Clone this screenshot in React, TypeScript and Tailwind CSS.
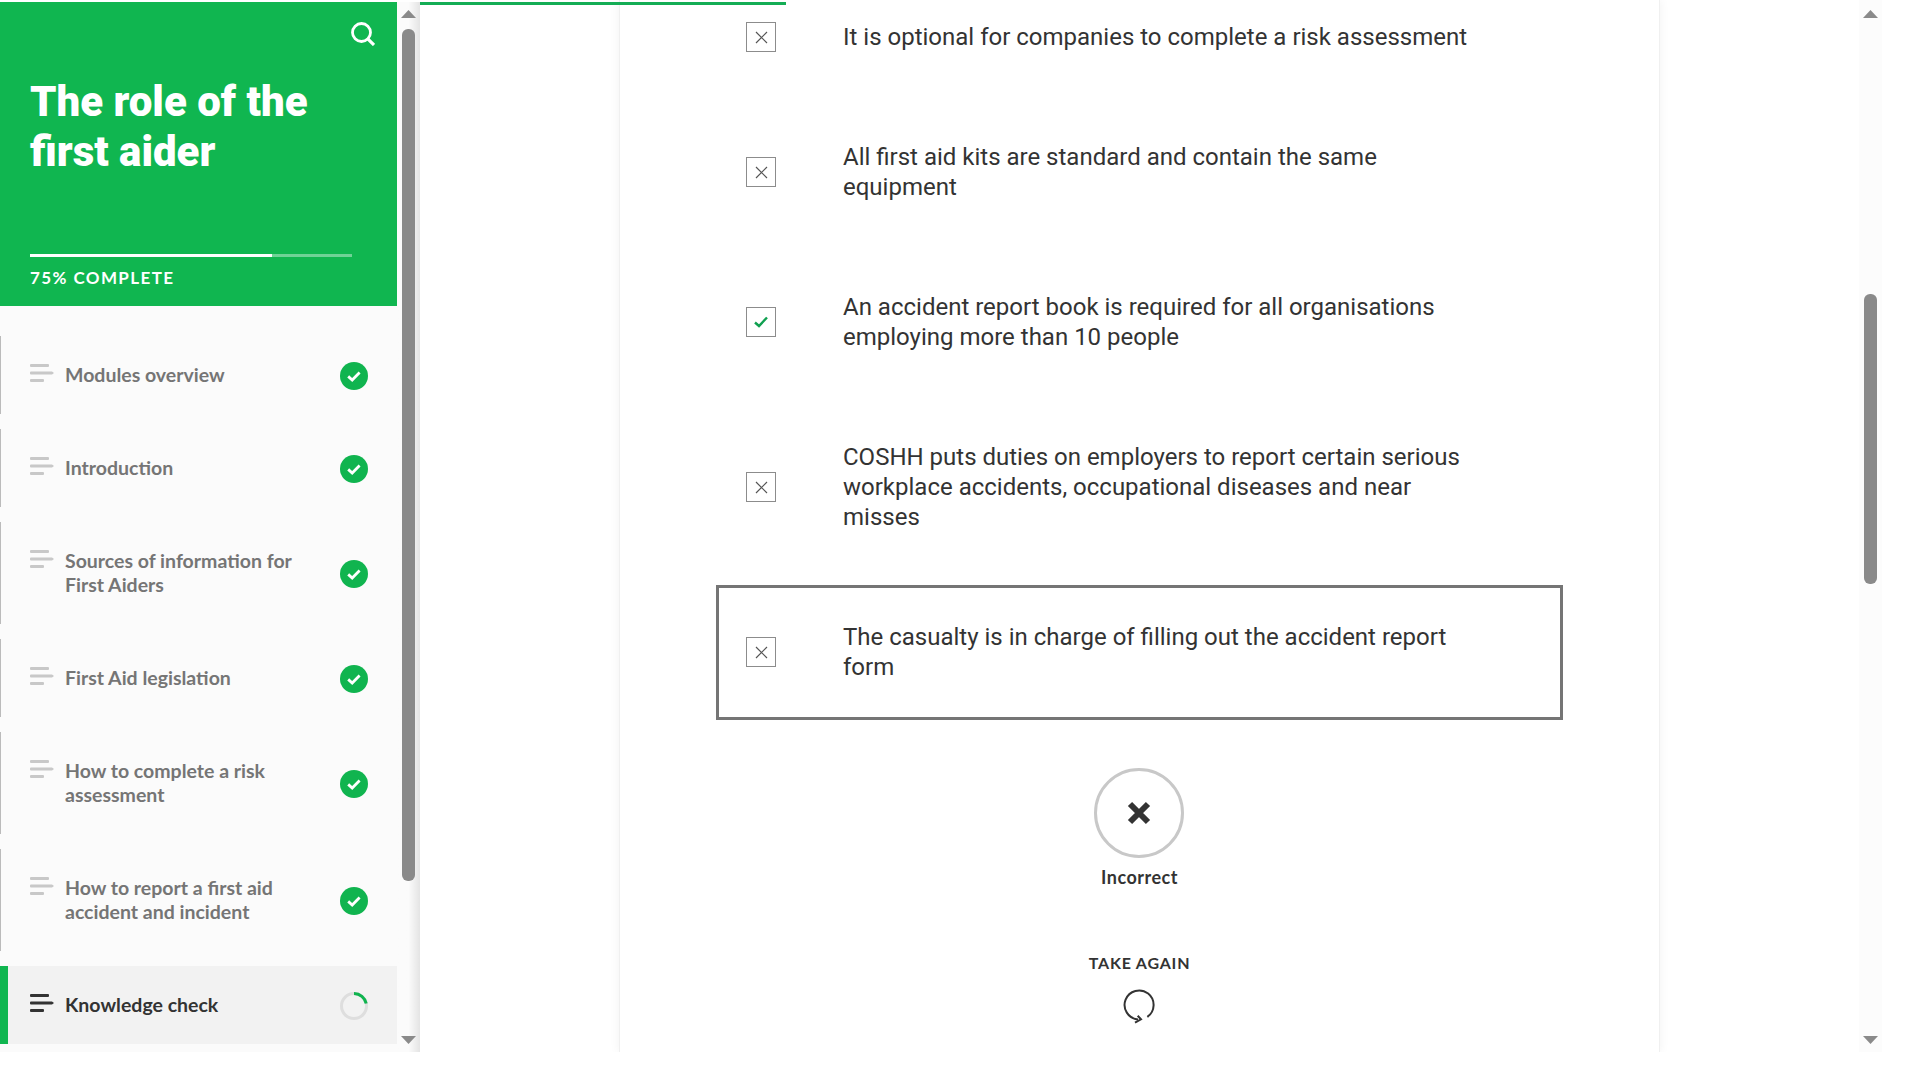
import React from "react";

const items = [
  { title: "Modules overview" },
  { title: "Introduction" },
  { title: "Sources of information for First Aiders" },
  { title: "First Aid legislation" },
  { title: "How to complete a risk assessment" },
  { title: "How to report a first aid accident and incident" },
];

const answers = [
  { text: "It is optional for companies to complete a risk assessment", ok: false },
  { text: "All first aid kits are standard and contain the same equipment", ok: false },
  { text: "An accident report book is required for all organisations employing more than 10 people", ok: true },
  { text: "COSHH puts duties on employers to report certain serious workplace accidents, occupational diseases and near misses", ok: false },
  { text: "The casualty is in charge of filling out the accident report form", ok: false, boxed: true },
];

function MenuIcon({ dark }: { dark?: boolean }) {
  const c = dark ? "#333333" : "#c8c8c8";
  return (
    <svg width="24" height="18" viewBox="0 0 24 18" className="shrink-0 mt-px">
      <rect x="0" y="0" width="19" height="3" rx="1" fill={c} />
      <path d="M0 8.5A1 1 0 0 1 1 7.5H22L24 9L22 10.5H1A1 1 0 0 1 0 9.5Z" fill={c} />
      <rect x="0" y="15" width="14" height="3" rx="1" fill={c} />
    </svg>
  );
}

function DoneIcon() {
  return (
    <svg width="28" height="28" viewBox="0 0 28 28">
      <circle cx="14" cy="14" r="14" fill="#10b44f" />
      <path d="M8.2 14.4L12.2 18L19.6 10.6" fill="none" stroke="#fff" strokeWidth="2.8" />
    </svg>
  );
}

function SpinnerIcon() {
  return (
    <svg width="28" height="28" viewBox="0 0 28 28">
      <circle cx="14" cy="14" r="12.5" fill="none" stroke="#dedede" strokeWidth="3" />
      <path d="M14 1.5A12.5 12.5 0 0 1 26.2 11.5" fill="none" stroke="#10b44f" strokeWidth="3" />
    </svg>
  );
}

function Arrow({ down, className }: { down?: boolean; className?: string }) {
  return (
    <svg width="15" height="8" viewBox="0 0 15 8" className={className}>
      <path d={down ? "M0 0H15L7.5 8Z" : "M7.5 0L15 8H0Z"} fill="#8a8a8a" />
    </svg>
  );
}

function Answer({ text, ok, boxed }: { text: string; ok: boolean; boxed?: boolean }) {
  return (
    <div className={`flex items-center border-[3px] pt-[34px] pl-[27px] ${boxed ? "border-[#757575] pb-[35px]" : "border-transparent pb-[34px]"}`}>
      <div className="flex h-[30px] w-[30px] shrink-0 items-center justify-center border border-[#8c8c8c] bg-white">
        {ok ? (
          <svg width="14" height="12" viewBox="0 0 14 12">
            <path d="M1 6.5L5 10L13 1.5" fill="none" stroke="#10a050" strokeWidth="2.4" />
          </svg>
        ) : (
          <svg width="13" height="13" viewBox="0 0 13 13">
            <path d="M1 1L12 12M12 1L1 12" fill="none" stroke="#555555" strokeWidth="1.2" />
          </svg>
        )}
      </div>
      <div className="ml-[67px] w-[630px] font-['Roboto',sans-serif] text-[24px] leading-[30px] text-[#333333]">{text}</div>
    </div>
  );
}

export default function App() {
  return (
    <div className="h-[1080px] w-[1920px] overflow-hidden bg-white">
      <div className="flex h-[1052px] w-[1882px]">
        <aside className="flex h-full w-[420px] shrink-0 pt-[2px]">
          <div className="flex w-[397px] shrink-0 flex-col overflow-hidden bg-[#fbfbfb]">
            <header className="h-[304px] shrink-0 bg-[#10b650] pl-[30px] text-white">
              <div className="flex justify-end pr-[22px] pt-[20px]">
                <svg width="24" height="24" viewBox="0 0 24 24">
                  <circle cx="10.5" cy="10.5" r="9" fill="none" stroke="#fff" strokeWidth="2.8" />
                  <path d="M16.8 16.8L23 23" stroke="#fff" strokeWidth="3.2" />
                </svg>
              </div>
              <h1 className="mt-[31px] font-['Roboto',sans-serif] text-[42px] font-black leading-[50px]">
                The role of the
                <br />
                first aider
              </h1>
              <div className="mt-[77px] flex h-[3px] w-[322px] bg-white/40">
                <div className="h-full w-[242px] bg-white" />
              </div>
              <div className="mt-[11px] font-['Lato',sans-serif] text-[17px] font-bold leading-[20px] tracking-[1.4px]">75% COMPLETE</div>
            </header>
            <nav className="flex flex-col gap-[15px] pt-[30px] font-['Lato',sans-serif] text-[19.5px] leading-[24px]">
              {items.map((it) => (
                <div key={it.title} className="flex items-center border-l border-[#bbbbbb] py-[27px] pl-[29px] pr-[29px] text-[#757575]">
                  <div className="flex flex-1 items-start">
                    <MenuIcon />
                    <span className="ml-[11px] w-[250px] font-bold">{it.title}</span>
                  </div>
                  <div className="mt-[2px] flex h-[22px] items-center"><DoneIcon /></div>
                </div>
              ))}
              <div className="flex items-center border-l-[8px] border-[#10b650] bg-[#f2f2f2] py-[27px] pl-[22px] pr-[29px] text-[#333333]">
                <div className="flex flex-1 items-start">
                  <MenuIcon dark />
                  <span className="ml-[11px] font-bold">Knowledge check</span>
                </div>
                <div className="mt-[2px] flex h-[22px] items-center"><SpinnerIcon /></div>
              </div>
            </nav>
          </div>
          <div className="flex w-[23px] shrink-0 flex-col items-center bg-gradient-to-r from-[#fbfbfb] via-[#fbfbfb] to-[#e4e4e4] pt-[8px]">
            <Arrow />
            <div className="mt-[11px] h-[852px] w-[13px] rounded-[6px] bg-[#8a8a8a]" />
            <Arrow down className="mt-[155px]" />
          </div>
        </aside>

        <main className="relative flex-1 overflow-hidden">
          <div className="absolute left-0 top-[2px] h-[3px] w-[366px] bg-[#14ad55]" />
          <div className="ml-[199px] flex h-full w-[1041px] flex-col border-x border-[#f0f0f0] shadow-[0_0_10px_rgba(0,0,0,0.06)]">
            <div className="-mt-[15px] flex flex-col items-center">
              <div className="flex w-[847px] flex-col gap-4">
                {answers.map((a) => (
                  <Answer key={a.text} text={a.text} ok={a.ok} boxed={a.boxed} />
                ))}
              </div>
              <div className="mr-px mt-[48px] flex h-[90px] w-[90px] items-center justify-center rounded-full border-[3px] border-[#c8c8c8]">
                <svg width="24" height="24" viewBox="0 0 24 24">
                  <path d="M3 3L21 21M21 3L3 21" fill="none" stroke="#333333" strokeWidth="6" />
                </svg>
              </div>
              <div className="mt-[8px] font-['Lato',sans-serif] text-[18px] font-bold leading-[22px] tracking-[0.5px] text-[#333333]">Incorrect</div>
              <div className="mt-[65px] font-['Lato',sans-serif] text-[16px] font-bold leading-[20px] tracking-[0.8px] text-[#333333]">TAKE AGAIN</div>
              <svg width="32" height="36" viewBox="0 0 32 36" className="mr-px mt-[16px]">
                <path d="M24.3 27.9A14.5 14.5 0 1 0 15 30.4" fill="none" stroke="#333333" strokeWidth="2" />
                <path d="M14.7 26.7L18 30.3L12 33.7" fill="none" stroke="#333333" strokeWidth="2" />
              </svg>
            </div>
          </div>
          <div className="absolute right-0 top-0 flex h-full w-[23px] flex-col items-center bg-[#fcfcfc] pt-[10px]">
            <Arrow />
            <div className="mt-[276px] h-[290px] w-[13px] rounded-[6px] bg-[#8a8a8a]" />
            <Arrow down className="mt-[452px]" />
          </div>
        </main>
      </div>
    </div>
  );
}
